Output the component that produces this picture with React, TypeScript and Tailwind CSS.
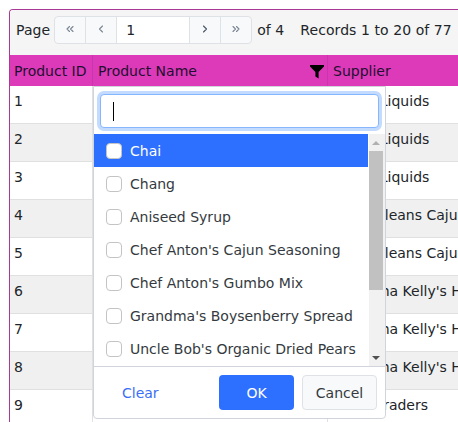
import React from 'react';
import { ChevronLeft, ChevronRight, ChevronsLeft, ChevronsRight } from 'lucide-react';

const rows = [
  [1, 'Exotic Liquids'],
  [2, 'Exotic Liquids'],
  [3, 'Exotic Liquids'],
  [4, 'New Orleans Cajun Delights'],
  [5, 'New Orleans Cajun Delights'],
  [6, "Grandma Kelly's Homestead"],
  [7, "Grandma Kelly's Homestead"],
  [8, "Grandma Kelly's Homestead"],
  [9, 'Tokyo Traders'],
];

const items = [
  'Chai',
  'Chang',
  'Aniseed Syrup',
  "Chef Anton's Cajun Seasoning",
  "Chef Anton's Gumbo Mix",
  "Grandma's Boysenberry Spread",
  "Uncle Bob's Organic Dried Pears",
];

function PagerButton({ children }: { children: React.ReactNode }) {
  return (
    <div className="w-[31px] h-full flex items-center justify-center border-r border-[#dee2e6] text-[#7b8593] pb-[3px]">
      {children}
    </div>
  );
}

export default function App() {
  return (
    <div className="relative w-[458px] h-[422px] overflow-hidden bg-white pl-[9px] pt-[9px] font-['DejaVu_Sans',sans-serif] text-[14px] text-[#212529]">
      <div className="w-[470px] h-[420px] border-l border-t border-[#a83a96] rounded-tl-[4px] overflow-hidden">
        {/* pager */}
        <div className="h-[45px] bg-[#f5f5f5] flex items-start pt-[6px] pl-[6px] whitespace-nowrap tracking-[0.07px]">
          <span className="mt-[4px]">Page</span>
          <div className="ml-[4px] h-[28px] flex items-center border border-[#dee2e6] rounded-[4px] bg-[#f8f9fa]">
            <PagerButton>
              <ChevronsLeft size={12} strokeWidth={2.2} />
            </PagerButton>
            <PagerButton>
              <ChevronLeft size={12} strokeWidth={2.2} />
            </PagerButton>
            <div className="w-[73px] h-full bg-white border-r border-[#dee2e6] pl-[9px] flex items-center">1</div>
            <PagerButton>
              <ChevronRight size={12} strokeWidth={2.2} className="text-[#475569]" />
            </PagerButton>
            <div className="w-[30px] h-full flex items-center justify-center text-[#7b8593] pb-[3px]">
              <ChevronsRight size={12} strokeWidth={2.2} />
            </div>
          </div>
          <span className="ml-[5px] mt-[4px]">of 4</span>
          <span className="ml-[16px] mt-[4px]">Records 1 to 20 of 77</span>
        </div>

        {/* header */}
        <div className="h-[31px] bg-[#dc3ab9] flex items-center text-[#1f1030] whitespace-nowrap">
          <div className="w-[83px] shrink-0 h-full flex items-center pl-[4px] pt-[1px] border-r border-[#c935aa]">Product ID</div>
          <div className="w-[235px] shrink-0 h-full flex items-center justify-between pl-[5px] pr-[2px] pt-[1px] border-r border-[#c935aa]">
            <span>Product Name</span>
            <svg viewBox="0 0 16 16" className="w-[16px] h-[16px] text-black mb-[1px]" fill="currentColor">
              <path d="M1 2h14v1.6L9.6 9v6.5l-3.2-2V9L1 3.6z" />
            </svg>
          </div>
          <div className="pl-[5px] pt-[1px]">Supplier</div>
        </div>

        {/* rows, the name column sits under the popup */}
        {rows.map((r, i) => (
          <div
            key={r[0]}
            className={`h-[38px] flex whitespace-nowrap border-b border-[#e0e0e0] ${i % 2 === 1 ? 'bg-[#f0f0f0]' : 'bg-white'}`}
          >
            <div className="w-[83px] shrink-0 pl-[4px] pt-[5px] border-r border-[#e0e0e0]">{r[0]}</div>
            <div className="w-[235px] shrink-0 border-r border-[#e0e0e0]" />
            <div className="pl-[5px] pt-[5px]">{r[1]}</div>
          </div>
        ))}
      </div>

      {/* filter popup */}
      <div className="absolute left-[93px] top-[86px] w-[293px] h-[333px] bg-white border border-[#d1d5db] rounded-b-[4px] flex flex-col">
        <div className="h-[47px] px-[6px] pt-[7px] shrink-0">
          <div className="h-[34px] rounded-[4px] border border-[#86b7fe] ring-[3px] ring-[#c2dbfe] bg-white flex items-center pl-[12px]">
            <div className="w-px h-[19px] bg-black" />
          </div>
        </div>
        <div className="h-[232px] flex shrink-0">
          <div className="w-[275px] overflow-hidden">
            {items.map((t, i) => (
              <div
                key={t}
                className={`h-[33px] flex items-center pl-[12px] whitespace-nowrap ${i === 0 ? 'bg-[#2d6fff] text-white' : 'text-[#343a40]'}`}
              >
                <div className="w-[16px] h-[16px] rounded-[4px] border border-[#c4c4c4] bg-white shrink-0" />
                <span className="ml-[8px] mt-[2px]">{t}</span>
              </div>
            ))}
          </div>
          <div className="ml-[1px] w-[16px] bg-[#f1f1f1] flex flex-col items-start">
            <div className="w-[14px] h-[17px] flex items-center justify-center">
              <div className="w-0 h-0 border-x-[4px] border-x-transparent border-b-[4px] border-b-[#b0b0b0]" />
            </div>
            <div className="w-[14px] h-[139px] bg-[#c1c1c1]" />
            <div className="flex-1" />
            <div className="w-[14px] h-[17px] flex items-center justify-center">
              <div className="w-0 h-0 border-x-[4px] border-x-transparent border-t-[4px] border-t-[#505050]" />
            </div>
          </div>
        </div>
        <div className="flex-1 border-t border-[#d1d5db] flex items-center pl-[28px] pr-[8px]">
          <span className="text-[#3b6ef6] mt-[2px]">Clear</span>
          <div className="ml-auto w-[75px] h-[35px] rounded-[4px] bg-[#2d6fff] text-white flex items-center justify-center pt-[1px]">OK</div>
          <div className="ml-[8px] w-[75px] h-[35px] rounded-[4px] bg-[#f8f9fa] border border-[#dee2e6] text-[#343a40] flex items-center justify-center pt-[1px]">Cancel</div>
        </div>
      </div>
    </div>
  );
}
